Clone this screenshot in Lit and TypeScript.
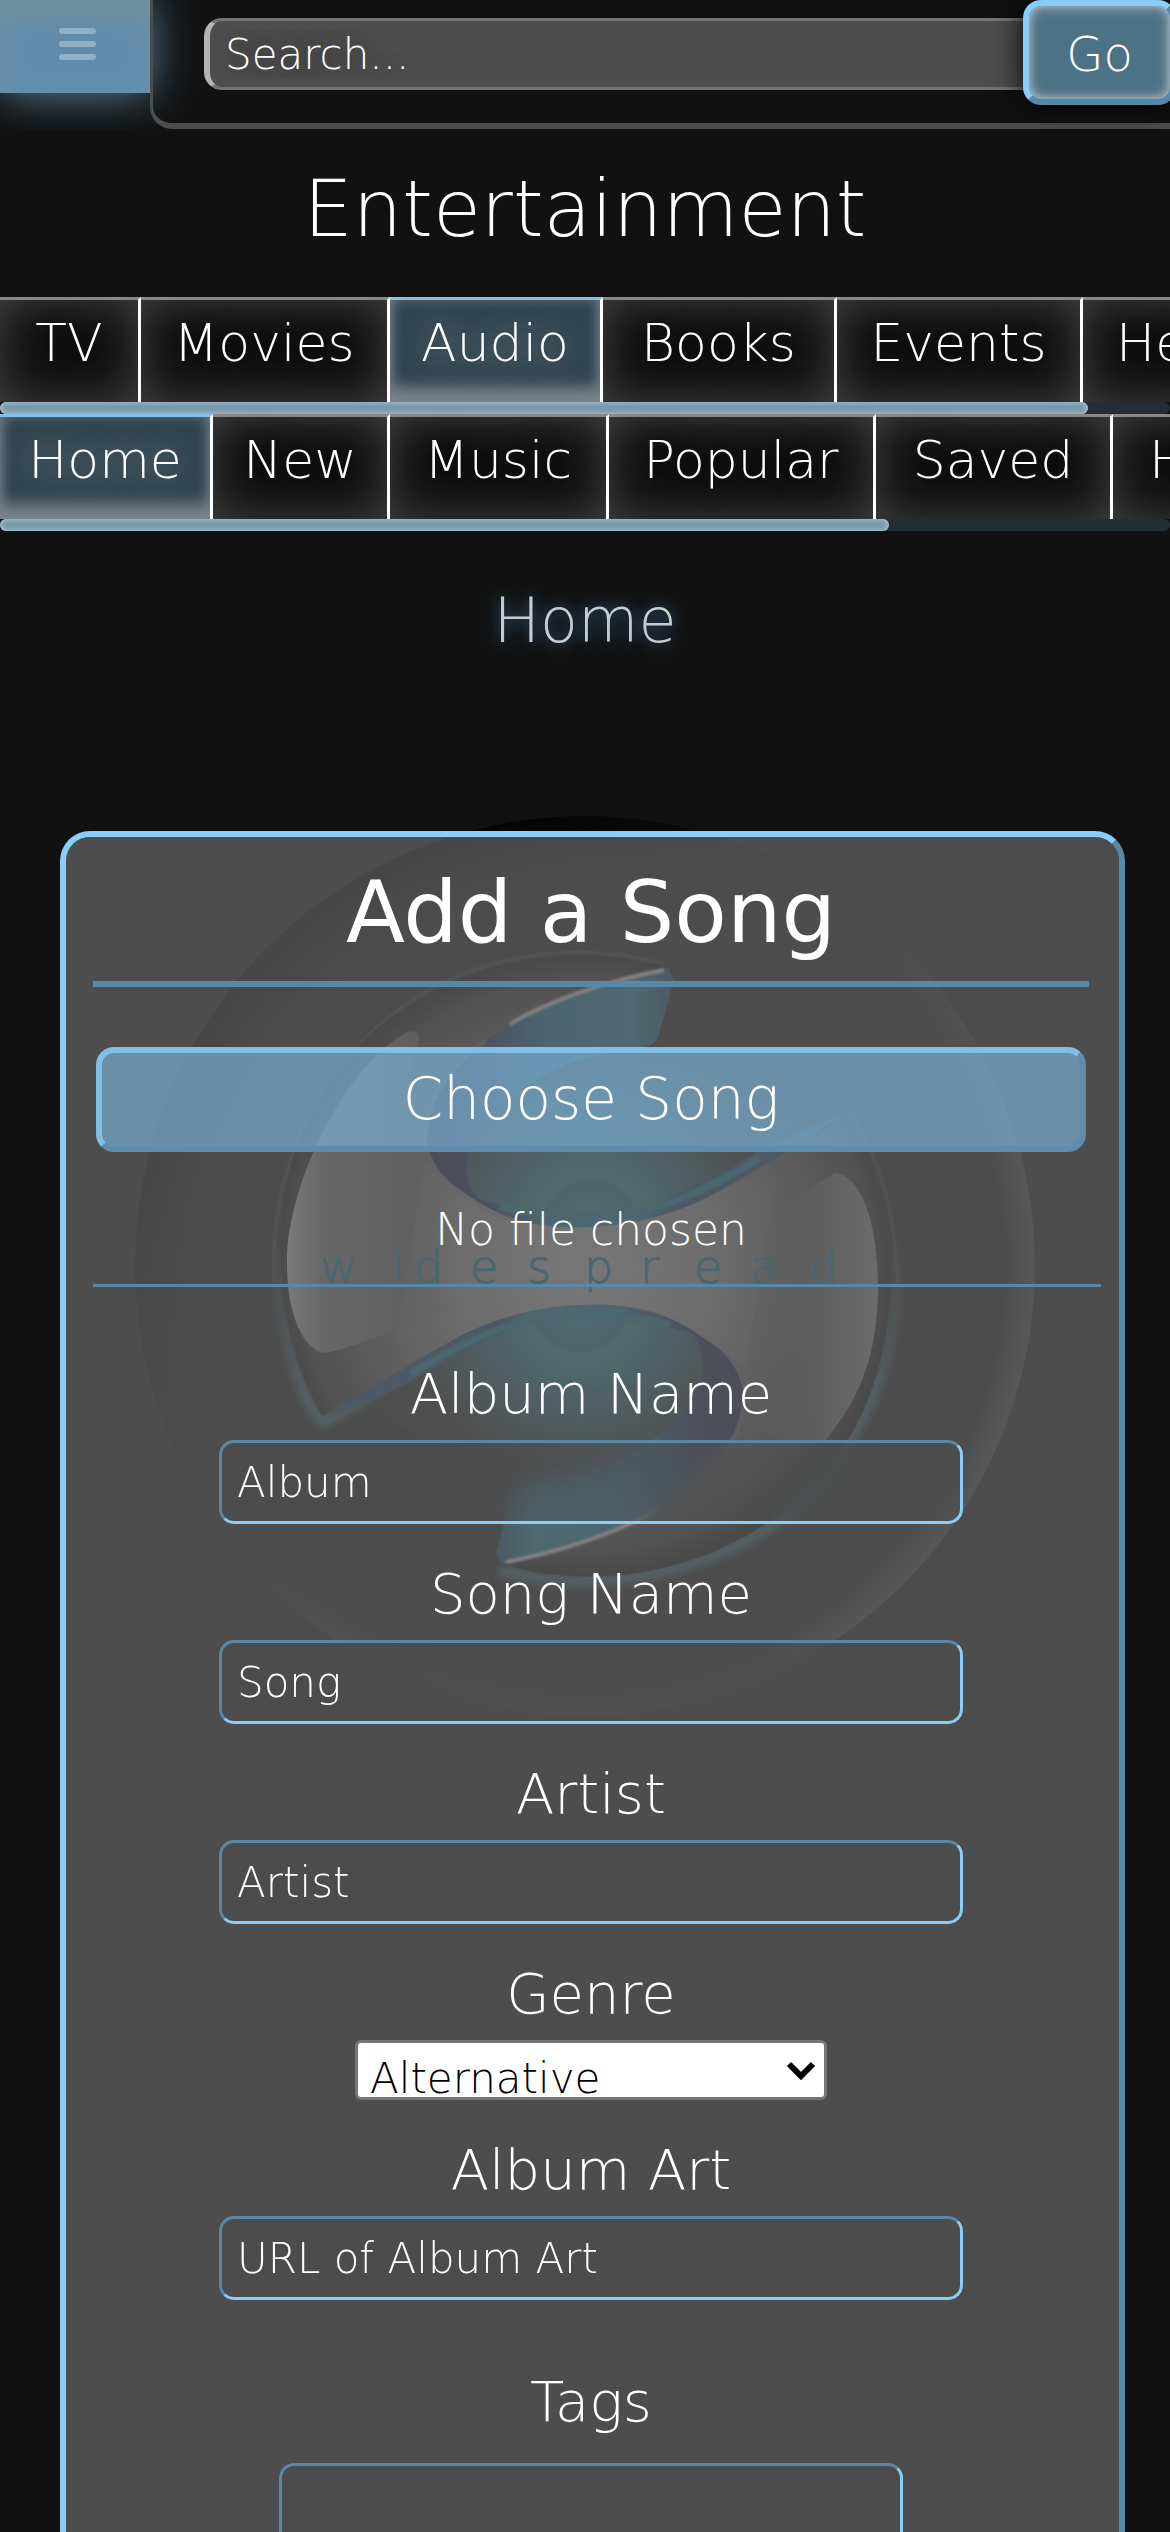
import { LitElement, html, css, svg } from "lit";
import { customElement, property } from "lit/decorators.js";
import { classMap } from "lit/directives/class-map.js";

interface Tab {
  name: string;
  width: number;
}

const SECTIONS: Tab[] = [
  { name: "TV", width: 141 },
  { name: "Movies", width: 249 },
  { name: "Audio", width: 213 },
  { name: "Books", width: 234 },
  { name: "Events", width: 246 },
  { name: "Health", width: 240 },
];

const PAGES: Tab[] = [
  { name: "Home", width: 213 },
  { name: "New", width: 177 },
  { name: "Music", width: 219 },
  { name: "Popular", width: 267 },
  { name: "Saved", width: 237 },
  { name: "History", width: 260 },
];

@customElement("tab-strip")
export class TabStrip extends LitElement {
  @property({ attribute: false }) tabs: Tab[] = [];
  @property() current = "";
  @property({ type: Number }) visible = 100;

  static styles = css`
    :host {
      display: block;
    }
    .strip {
      display: flex;
      overflow: hidden;
    }
    .tab {
      flex: none;
      box-sizing: border-box;
      height: 105px;
      border-top: 3px solid #888;
      border-right: 3px solid #fff;
      box-shadow: inset 0 0 45px #444;
      background: #111;
      color: #fff;
      font-size: 52px;
      line-height: 86px;
      text-align: center;
      text-decoration: none;
      text-shadow: 0 0 24px #000;
    }
    .tab.current {
      border-top-color: #87c0e4;
      background: #304350;
      box-shadow: inset 0 -15px 15px #78838a, inset 0 0 12px #5f717b;
      text-shadow: 0 0 30px #8a9a9a;
    }
    .track {
      height: 12px;
      border-radius: 6px;
      background: #232d34;
    }
    .thumb {
      height: 12px;
      border-radius: 6px;
      background: #7296aa;
      box-shadow: inset 0 0 6px #c3d0da;
    }
  `;

  render() {
    return html`
      <nav class="strip">
        ${this.tabs.map(
          (t) => html`<a
            href="#"
            class=${classMap({ tab: true, current: t.name === this.current })}
            style="width:${t.width}px"
            >${t.name}</a
          >`
        )}
      </nav>
      <div class="track">
        <div class="thumb" style="width:${this.visible}%"></div>
      </div>
    `;
  }
}

/* One half of the emblem; the other half is the same shape turned by 180 degrees. */
const half = svg`
  <path fill="url(#blade)" d="M668 968 C600 980 530 1012 486 1040 C444 1070 427 1104 427 1136 C428 1154 436 1170 452 1184 C478 1202 500 1222 560 1227 C620 1230 670 1216 706 1198 C755 1172 806 1140 844 1114 C800 1130 760 1150 720 1170 C640 1210 540 1215 479 1199 C462 1180 464 1152 484 1126 C508 1094 545 1068 600 1054 C628 1048 648 1050 657 1040 C664 1020 668 998 674 980 Z"/>
  <path fill="url(#lens)" d="M479 1199 C462 1180 464 1152 484 1126 C508 1094 545 1068 600 1054 C660 1050 740 1080 800 1128 C740 1160 706 1184 660 1202 C600 1222 530 1214 479 1199 Z"/>
  <path fill="none" stroke="#114556" stroke-width="7" filter="url(#soft1)" d="M500 1207 C560 1222 630 1216 670 1203 C700 1192 730 1176 760 1158"/>
  <path fill="none" stroke="#777" stroke-width="4" filter="url(#soft1)" d="M510 1024 C550 1000 610 980 664 970"/>
  <path fill="none" stroke="#3d3d3d" stroke-width="3" filter="url(#soft1)" d="M426 1136 C426 1104 444 1072 486 1040"/>
`;

@customElement("brand-emblem")
export class BrandEmblem extends LitElement {
  static styles = css`
    :host {
      display: block;
    }
    .art {
      display: block;
      width: 100%;
      height: auto;
    }
    .word {
      font-family: "DejaVu Sans Light", "DejaVu Sans", sans-serif;
      font-weight: 200;
      font-size: 46px;
      fill: #0b4358;
      stroke: #0b4358;
      stroke-width: 1px;
    }
  `;

  render() {
    return html`
      <svg class="art" viewBox="135 816 900 900" aria-hidden="true">
        <defs>
          <radialGradient id="rim" cx="585" cy="1266" r="450" gradientUnits="userSpaceOnUse">
            <stop offset="0.82" stop-color="#000" stop-opacity="0" />
            <stop offset="0.95" stop-color="#000" stop-opacity="0.6" />
            <stop offset="1" stop-color="#000" stop-opacity="0.75" />
          </radialGradient>
          <radialGradient id="shine" cx="585" cy="1266" r="450" gradientUnits="userSpaceOnUse">
            <stop offset="0.93" stop-color="#444" stop-opacity="0" />
            <stop offset="1" stop-color="#444" stop-opacity="0.4" />
          </radialGradient>
          <linearGradient id="fadeA" x1="280" y1="960" x2="690" y2="1370" gradientUnits="userSpaceOnUse">
            <stop offset="0.1" stop-color="#fff" />
            <stop offset="0.6" stop-color="#000" />
          </linearGradient>
          <linearGradient id="fadeB" x1="480" y1="1160" x2="880" y2="1560" gradientUnits="userSpaceOnUse">
            <stop offset="0.2" stop-color="#000" />
            <stop offset="0.7" stop-color="#fff" />
          </linearGradient>
          <mask id="maskA" maskUnits="userSpaceOnUse" x="135" y="816" width="900" height="900">
            <rect x="135" y="816" width="900" height="900" fill="url(#fadeA)" />
          </mask>
          <mask id="maskB" maskUnits="userSpaceOnUse" x="135" y="816" width="900" height="900">
            <rect x="135" y="816" width="900" height="900" fill="url(#fadeB)" />
          </mask>
          <radialGradient id="body" cx="585" cy="1266" r="318" gradientUnits="userSpaceOnUse">
            <stop offset="0" stop-color="#5c5c5c" />
            <stop offset="0.4" stop-color="#484848" />
            <stop offset="0.7" stop-color="#303030" />
            <stop offset="0.9" stop-color="#1a1a1a" />
            <stop offset="0.97" stop-color="#0a0a0a" />
            <stop offset="1" stop-color="#0e0e0e" />
          </radialGradient>
          <linearGradient id="gloss" x1="287" y1="0" x2="460" y2="0" gradientUnits="userSpaceOnUse">
            <stop offset="0" stop-color="#6a6a6a" />
            <stop offset="0.2" stop-color="#454545" />
            <stop offset="0.7" stop-color="#363636" />
            <stop offset="1" stop-color="#3a3a3a" stop-opacity="0" />
          </linearGradient>
          <linearGradient id="gloss2" x1="878" y1="0" x2="740" y2="0" gradientUnits="userSpaceOnUse">
            <stop offset="0" stop-color="#4e4e4e" />
            <stop offset="0.4" stop-color="#363636" />
            <stop offset="1" stop-color="#303030" stop-opacity="0" />
          </linearGradient>
          <linearGradient id="blade" x1="427" y1="0" x2="672" y2="0" gradientUnits="userSpaceOnUse">
            <stop offset="0" stop-color="#0f1022" />
            <stop offset="0.2" stop-color="#101630" />
            <stop offset="0.5" stop-color="#0e4258" />
            <stop offset="0.85" stop-color="#124856" />
            <stop offset="1" stop-color="#102a40" />
          </linearGradient>
          <radialGradient id="lens" cx="590" cy="1228" r="175" gradientUnits="userSpaceOnUse">
            <stop offset="0" stop-color="#1a4c5a" />
            <stop offset="0.27" stop-color="#14404f" />
            <stop offset="0.29" stop-color="#174a54" />
            <stop offset="0.42" stop-color="#164548" />
            <stop offset="0.5" stop-color="#153a48" />
            <stop offset="0.72" stop-color="#182a2e" />
            <stop offset="1" stop-color="#141414" />
          </radialGradient>
          <radialGradient id="core" cx="585" cy="1266" r="220" gradientUnits="userSpaceOnUse">
            <stop offset="0" stop-color="#6a6a6a" stop-opacity="0.5" />
            <stop offset="1" stop-color="#6a6a6a" stop-opacity="0" />
          </radialGradient>
          <linearGradient id="arc" x1="0" y1="1230" x2="0" y2="1400" gradientUnits="userSpaceOnUse">
            <stop offset="0" stop-color="#24343a" stop-opacity="0" />
            <stop offset="1" stop-color="#24404c" />
          </linearGradient>
          <filter id="soft1" x="-20%" y="-20%" width="140%" height="140%">
            <feGaussianBlur stdDeviation="1" />
          </filter>
          <filter id="soft4" x="-20%" y="-20%" width="140%" height="140%">
            <feGaussianBlur stdDeviation="4" />
          </filter>
        </defs>
        <circle cx="585" cy="1266" r="450" fill="url(#rim)" mask="url(#maskA)" />
        <circle cx="585" cy="1266" r="450" fill="url(#shine)" mask="url(#maskB)" />
        <path
          fill="none"
          stroke="url(#arc)"
          stroke-width="9"
          filter="url(#soft4)"
          d="M276 1240 C278 1330 300 1395 322 1422 C350 1412 400 1370 470 1340 M500 1570 C600 1596 720 1574 800 1502 C870 1432 902 1350 898 1230"
        />
        <path
          fill="none"
          stroke="#1e2423"
          stroke-width="3"
          filter="url(#soft1)"
          d="M274 1290 C268 1180 310 1085 380 1025 C450 962 560 935 664 964 M898 1290 C896 1210 880 1160 850 1112"
        />
        <path
          fill="url(#body)"
          d="M322 1416 C262 1310 262 1150 352 1052 C430 968 560 935 668 968 L540 1060 L560 1210 L706 1198 L848 1116 C908 1222 908 1382 818 1480 C740 1564 610 1597 502 1564 L630 1472 L610 1322 L464 1334 Z"
        />
        <path
          fill="url(#gloss)"
          d="M287 1262 C287 1180 350 1060 408 1032 C420 1028 422 1040 414 1056 C400 1090 440 1180 480 1210 L500 1310 C420 1310 360 1350 322 1353 C300 1345 287 1310 287 1262 Z"
        />
        <path
          fill="url(#gloss2)"
          d="M835 1173 C864 1176 878 1230 878 1290 C877 1370 850 1410 824 1442 C790 1450 760 1440 740 1400 L740 1230 Z"
        />
        <path
          fill="url(#core)"
          d="M425 1160 C470 1210 500 1225 560 1227 C640 1230 720 1195 780 1160 L745 1370 C700 1330 670 1307 610 1305 C530 1302 450 1340 390 1376 Z"
        />
        ${half}
        <g transform="rotate(180 585 1266)">${half}</g>
        <text class="word" x="320 392 414 470 527 584 640 694 750 808" y="1283">widespread</text>
      </svg>
    `;
  }
}

@customElement("app-root")
export class AppRoot extends LitElement {
  static styles = css`
    :host {
      display: block;
      height: 100vh;
      overflow-x: hidden;
      overflow-y: auto;
      scrollbar-width: none;
      background: #111;
      color: #fff;
      font-family: "DejaVu Sans Light", "DejaVu Sans", sans-serif;
      font-weight: 200;
    }
    button,
    input,
    select,
    textarea {
      box-sizing: border-box;
      margin: 0;
      color: inherit;
      font: inherit;
      outline: none;
    }
    .top {
      display: flex;
      overflow: hidden;
    }
    .menu {
      width: 150px;
      height: 93px;
      padding: 0;
      border: 0;
      background: #5f8cab;
      box-shadow: 0 0 45px #5f8cab, inset 0 24px 24px #6f8fa2, inset 0 0 45px #6892b0;
    }
    .bars {
      display: block;
      width: 40px;
      margin: 0 auto 6px 58px;
    }
    .bar {
      display: flex;
      flex: 1;
      box-sizing: border-box;
      min-width: 0;
      height: 129px;
      padding-left: 51px;
      border-left: 3px solid #4d4d4d;
      border-bottom: 6px solid #4d4d4d;
      border-bottom-left-radius: 22px;
    }
    .query {
      flex: 1;
      min-width: 0;
      height: 72px;
      margin: 18px -21px 0 0;
      padding: 0 0 0 15px;
      border: 3px solid #747474;
      border-left: 6px solid #b3b3b3;
      border-radius: 18px;
      background: #4d4d4d;
      font-size: 42px;
      text-shadow: 0 0 24px #222;
    }
    ::placeholder {
      color: #fff;
      opacity: 1;
    }
    .go {
      position: relative;
      flex: none;
      width: 153px;
      height: 105px;
      margin-right: -6px;
      padding: 3px 0 0;
      border: 6px solid;
      border-color: #87cefa #5888a8 #5888a8 #87cefa;
      border-radius: 18px;
      background: #4d7186;
      box-shadow: 0 0 30px #000, inset 0 0 12px #d0d8dc;
      font-size: 48px;
    }
    .heading {
      margin: 0;
      padding: 38px 0 46px;
      font-size: 78px;
      font-weight: inherit;
      line-height: 84px;
      text-align: center;
    }
    .page {
      margin: 54px 0 174px;
      color: #c8cccf;
      font-size: 62px;
      font-weight: inherit;
      line-height: 72px;
      text-align: center;
      text-shadow: 0 0 15px #4682b4;
    }
    .main {
      position: relative;
    }
    .emblem {
      position: absolute;
      top: -15px;
      left: 50%;
      width: 900px;
      margin-left: -450px;
    }
    .card {
      position: relative;
      margin: 0 45px 0 60px;
      padding: 27px 30px 60px 27px;
      border: 6px solid;
      border-color: #87cefa #5888a8 #5888a8 #87cefa;
      border-radius: 30px;
      background: rgba(137, 137, 137, 0.5);
      background-clip: padding-box;
    }
    .title {
      margin: 0 0 60px;
      padding-bottom: 21px;
      border-bottom: 6px solid #5888a8;
      font-family: "DejaVu Sans", sans-serif;
      font-size: 86px;
      font-weight: 400;
      line-height: 96px;
      text-align: center;
    }
    .choose {
      display: block;
      width: calc(100% - 6px);
      height: 105px;
      margin: 0 3px 48px;
      padding: 0;
      border: 6px solid;
      border-color: #7fbfe8 #5f8cab #5f8cab #7fbfe8;
      border-radius: 18px;
      background: rgba(123, 182, 220, 0.63);
      font-size: 58px;
      line-height: 93px;
    }
    .file {
      margin: 0 -12px 71px 0;
      padding: 0 12px 24px 0;
      border-bottom: 3px solid #5888a8;
      font-size: 44px;
      line-height: 60px;
      text-align: center;
    }
    .field {
      display: flex;
      flex-direction: column;
      align-items: center;
      gap: 10px;
      margin-bottom: 34px;
    }
    .label {
      font-size: 56px;
      line-height: 72px;
    }
    .box {
      width: 744px;
      max-width: 100%;
      height: 84px;
      padding: 0 15px;
      border: 3px solid;
      border-color: #5888a8 #87cefa #87cefa #5888a8;
      border-radius: 15px;
      background: rgba(77, 77, 77, 0.3);
      backdrop-filter: blur(12px);
      font-size: 42px;
    }
    .pick {
      display: grid;
      align-items: center;
      width: 472px;
      max-width: 100%;
    }
    .genre {
      grid-area: 1 / 1;
      width: 100%;
      height: 60px;
      padding: 12px 0 0 12px;
      border: 3px solid #767676;
      border-radius: 6px;
      background: #fff;
      color: #000;
      font-size: 42px;
      line-height: 48px;
      appearance: none;
    }
    .chevron {
      grid-area: 1 / 1;
      justify-self: end;
      width: 30px;
      margin-right: 11px;
      pointer-events: none;
    }
    .tags {
      gap: 25px;
      margin-top: 66px;
    }
    .area {
      width: 624px;
      height: 240px;
      resize: none;
    }
  `;

  private textField(id: string, label: string, hint: string) {
    return html`<div class="field">
      <label class="label" for=${id}>${label}</label>
      <input class="box" id=${id} type="text" placeholder=${hint} />
    </div>`;
  }

  render() {
    return html`
      <header class="top">
        <button class="menu" aria-label="Menu">
          <svg class="bars" viewBox="0 0 40 36" aria-hidden="true">
            <g stroke="#90b1c6" stroke-width="6" stroke-linecap="round">
              <path d="M4 5H35M4 18H35M4 31H35" />
            </g>
          </svg>
        </button>
        <div class="bar">
          <input class="query" type="search" aria-label="Search" placeholder="Search..." />
          <button class="go">Go</button>
        </div>
      </header>
      <h1 class="heading">Entertainment</h1>
      <tab-strip .tabs=${SECTIONS} current="Audio" visible="93"></tab-strip>
      <tab-strip .tabs=${PAGES} current="Home" visible="76"></tab-strip>
      <h2 class="page">Home</h2>
      <main class="main">
        <brand-emblem class="emblem"></brand-emblem>
        <form class="card">
          <h3 class="title">Add a Song</h3>
          <button class="choose" type="button">Choose Song</button>
          <div class="file">No file chosen</div>
          ${this.textField("album", "Album Name", "Album")}
          ${this.textField("song", "Song Name", "Song")}
          ${this.textField("artist", "Artist", "Artist")}
          <div class="field">
            <label class="label" for="genre">Genre</label>
            <div class="pick">
              <select class="genre" id="genre">
                <option>Alternative</option>
              </select>
              <svg class="chevron" viewBox="0 0 30 20" aria-hidden="true">
                <path d="M3 4L15 16L27 4" fill="none" stroke="#000" stroke-width="6" />
              </svg>
            </div>
          </div>
          ${this.textField("art", "Album Art", "URL of Album Art")}
          <div class="field tags">
            <label class="label" for="tags">Tags</label>
            <textarea class="box area" id="tags"></textarea>
          </div>
        </form>
      </main>
    `;
  }
}
